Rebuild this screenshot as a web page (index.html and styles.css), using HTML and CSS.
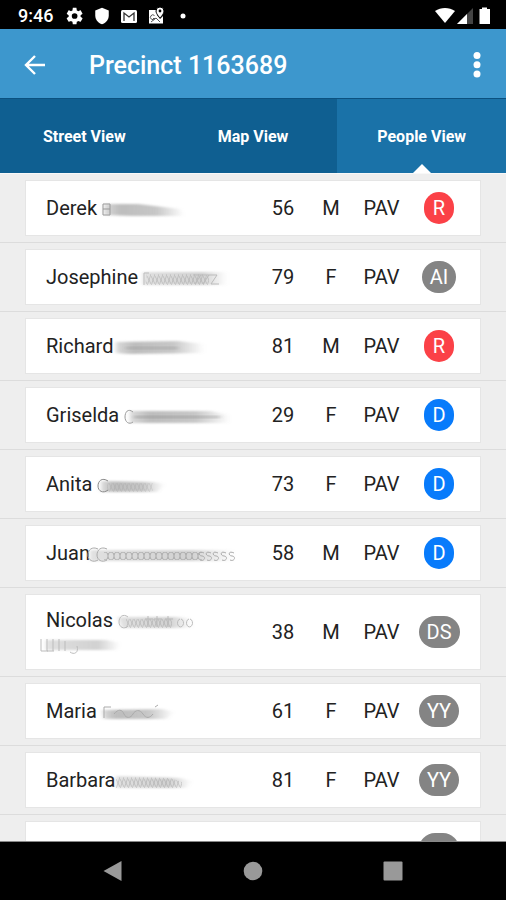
FILE: index.html
```html
<!DOCTYPE html>
<html lang="en">
<head>
<meta charset="utf-8">
<meta name="viewport" content="width=device-width, initial-scale=1">
<title>Precinct 1163689</title>
<link rel="stylesheet" href="styles.css">
</head>
<body>
<svg class="defs" aria-hidden="true">
  <defs>
    <linearGradient id="fade"><stop offset="0" stop-color="#999" stop-opacity=".35"/><stop offset=".2" stop-color="#999" stop-opacity=".65"/><stop offset=".65" stop-color="#999" stop-opacity=".55"/><stop offset="1" stop-color="#999" stop-opacity="0"/></linearGradient>
    <linearGradient id="fade-light"><stop offset="0" stop-color="#999" stop-opacity=".3"/><stop offset=".7" stop-color="#999" stop-opacity=".45"/><stop offset="1" stop-color="#999" stop-opacity="0"/></linearGradient>
    <filter id="soft" x="-20%" y="-40%" width="140%" height="180%"><feGaussianBlur stdDeviation="2 1"/></filter>
    <filter id="fine" x="-20%" y="-40%" width="140%" height="180%"><feGaussianBlur stdDeviation=".7"/></filter>
    <pattern id="hatch" width="4" height="20" patternUnits="userSpaceOnUse"><path d="M0 17 4 5M0 7 4 15" stroke="#888" stroke-opacity=".3" fill="none"/></pattern>
    <pattern id="rings" width="6" height="20" patternUnits="userSpaceOnUse"><ellipse cx="3" cy="11" rx="3" ry="4" stroke="#888" stroke-opacity=".5" fill="none"/></pattern>
  </defs>
</svg>

<div class="status">
  <span class="clock">9:46</span>
  <svg width="18" height="18" viewBox="0 0 24 24" fill="#fff" aria-hidden="true"><path d="M19.4 13c.1-.3.1-.7.1-1s0-.7-.1-1l2.4-1.800c.2-.2.3-.5.1-.7l-2.200-3.900c-.1-.2-.4-.3-.7-.2l-2.700 1.100c-.6-.4-1.200-.8-1.900-1L14 1.500c0-.3-.3-.5-.5-.5h-4c-.3 0-.5.200-.5.500L8.600 4.500c-.7.2-1.300.6-1.900 1L4 4.400c-.3-.1-.6 0-.7.2L1.100 8.500c-.1.200-.1.500.1.700L3.600 11c-.1.300-.1.700-.1 1s0 .7.1 1l-2.400 1.800c-.2.200-.3.500-.1.700l2.200 3.900c.1.200.4.300.7.200l2.700-1.100c.6.400 1.200.8 1.900 1l.4 3c0 .3.200.5.500.5h4c.3 0 .5-.2.500-.5l.4-3c.7-.2 1.300-.6 1.900-1l2.700 1.100c.3.100.6 0 .7-.2l2.200-3.900c.1-.2.1-.5-.1-.7L19.400 13zM11.500 15.800a3.800 3.800 0 1 1 0-7.600 3.800 3.800 0 0 1 0 7.600z"/></svg>
  <svg width="18" height="18" viewBox="0 0 24 24" fill="#fff" aria-hidden="true"><path d="M12 1 3 4.500V11c0 6 3.800 10.500 9 12 5.200-1.500 9-6 9-12V4.500z"/></svg>
  <svg width="18" height="18" viewBox="0 0 18 18" aria-hidden="true"><rect x="1" y="3" width="16" height="13" rx="1.500" fill="#fff"/><path d="M4 14V6l5 4 5-4v8" fill="none" stroke="#333" stroke-width="1.300"/></svg>
  <svg width="18" height="18" viewBox="0 0 18 18" aria-hidden="true"><path d="M2 3h8v5l3 4 3-3v7.500H2z" fill="#fff"/><path d="M13 0a4 4 0 0 0-4 4c0 3 4 7 4 7s4-4 4-7a4 4 0 0 0-4-4z" fill="#fff" stroke="#000"/><circle cx="13" cy="4" r="1.400"/><path d="M7.500 8.500a2.400 2.400 0 1 0 .4 3H6M4 15l5-4 4 4" fill="none" stroke="#555"/></svg>
  <svg width="18" height="18" viewBox="0 0 18 18" aria-hidden="true"><circle cx="9" cy="9" r="2.500" fill="#fff"/></svg>
  <span class="signals">
    <svg width="20" height="18" viewBox="0 0 20 18" aria-hidden="true"><path d="M0 4C6 0 14 0 20 4L10 16z" fill="#fff"/></svg>
    <svg width="16" height="18" viewBox="0 0 16 18" aria-hidden="true"><path d="M0 17 16 1v16z" fill="#444"/><path d="M0 17 10 7v10z" fill="#fff"/></svg>
    <svg width="20" height="18" viewBox="0 0 20 18" aria-hidden="true"><path d="M7 2V.5h5V2h3v15H4.500V2z" fill="#fff"/></svg>
  </span>
</div>

<header class="bar">
  <button class="icon-button" type="button" aria-label="Back"><svg width="22" height="22" viewBox="0 0 22 22" fill="none" stroke="#fff" stroke-width="2.400"><path d="M21 11H3M11 2l-9 9 9 9"/></svg></button>
  <h1>Precinct 1163689</h1>
  <button class="icon-button" type="button" aria-label="More options"><svg width="10" height="28" viewBox="0 0 10 28" fill="#fff"><circle cx="5" cy="4.500" r="3.500"/><circle cx="5" cy="13.800" r="3.500"/><circle cx="5" cy="23" r="3.500"/></svg></button>
</header>

<nav class="tabs">
  <a href="#street">Street View</a>
  <a href="#map">Map View</a>
  <a class="active" href="#people" aria-current="page">People View</a>
</nav>

<main id="people">
<ul class="people">
  <li><div class="card"><div class="name">Derek <svg width="90" height="20" aria-hidden="true"><path filter="url(#soft)" fill="url(#fade)" d="M2 4 36 4 78 9 82 16 30 16 2 15z"/><path filter="url(#fine)" d="M1 15V4h7v11zM1 9h7" fill="none" stroke="#999"/></svg></div><span>56</span><span>M</span><span>PAV</span><span><b class="badge red">R</b></span></div></li>
  <li><div class="card"><div class="name">Josephine <svg width="90" height="20" aria-hidden="true"><path filter="url(#soft)" fill="url(#fade-light)" d="M0 3H84V16H0z"/><path filter="url(#fine)" fill="url(#hatch)" d="M4 4H58L66 7V16H2z"/><path filter="url(#fine)" d="M1 4v12M1 4h5M66 6h8l-6 9h8M58 6h8l-6 9M50 6h8l-6 9" fill="none" stroke="#bbb"/></svg></div><span>79</span><span>F</span><span>PAV</span><span><b class="badge">AI</b></span></div></li>
  <li><div class="card"><div class="name">Richard <svg width="90" height="20" aria-hidden="true"><path filter="url(#soft)" fill="url(#fade)" d="M-2 4 60 3 86 6V15L10 16-2 15z"/><path filter="url(#soft)" d="M8 9H60V11H8z" fill="#888" fill-opacity=".4"/></svg></div><span>81</span><span>M</span><span>PAV</span><span><b class="badge red">R</b></span></div></li>
  <li><div class="card"><div class="name">Griselda <svg width="108" height="20" aria-hidden="true"><path filter="url(#soft)" fill="url(#fade)" d="M6 4 86 4 106 8V16H6z"/><path filter="url(#soft)" d="M10 9H96V11H10z" fill="#777" fill-opacity=".4"/><path filter="url(#fine)" d="M9 5C4 1 1 5 1 10s4 8 8 5" fill="none" stroke="#999"/></svg></div><span>29</span><span>F</span><span>PAV</span><span><b class="badge blue">D</b></span></div></li>
  <li><div class="card"><div class="name">Anita <svg width="72" height="20" aria-hidden="true"><path filter="url(#soft)" fill="url(#fade)" d="M4 5 56 6 68 8 60 16H4z"/><path filter="url(#fine)" fill="url(#hatch)" d="M10 7H56V16H10z" opacity=".6"/><path filter="url(#fine)" d="M11 5C5 1 1 5 1 10s5 8 10 4" fill="none" stroke="#888"/></svg></div><span>73</span><span>F</span><span>PAV</span><span><b class="badge blue">D</b></span></div></li>
  <li><div class="card"><div class="name">Juan<svg width="150" height="20" aria-hidden="true"><path filter="url(#soft)" fill="url(#fade-light)" d="M0 5H144V16H0z"/><path filter="url(#fine)" fill="url(#rings)" d="M14 7H112V15H14z"/><path filter="url(#fine)" d="M8 4C2 1-2 5-2 10s5 8 10 5M17 4C11 1 7 5 7 10s5 8 10 5M114 8c-6-3-6 3-2 3s3 6-2 4M121 8c-6-3-6 3-2 3s3 6-2 4M128 8c-6-3-6 3-2 3s3 6-2 4M136 8c-6-3-6 3-2 3s3 6-2 4M144 8c-6-3-6 3-2 3s3 6-2 4" fill="none" stroke="#aaa"/></svg></div><span>58</span><span>M</span><span>PAV</span><span><b class="badge blue">D</b></span></div></li>
  <li><div class="card"><div class="name">Nicolas <svg width="82" height="20" aria-hidden="true"><path filter="url(#soft)" fill="url(#fade-light)" d="M0 5H60L74 7V16H4z"/><path filter="url(#fine)" fill="url(#hatch)" d="M8 7H54V16H8z"/><path filter="url(#fine)" d="M10 5C5 1 1 5 1 10s5 8 9 4M30 4v11M27 7h8M39 4v11M36 7h8M50 4v11M47 7h8M62 7a3 4 0 1 0 1 0M71 7a3 4 0 1 0 1 0" fill="none" stroke="#bbb"/></svg><br><svg width="90" height="20" aria-hidden="true"><path filter="url(#soft)" fill="url(#fade-light)" d="M0 4H60L74 7 70 14H0z"/><path filter="url(#fine)" d="M-5 3V15H2M1 3V15H8M7 3V15M13 3V15M19 5V15M31 10c2 7-3 9-7 6" fill="none" stroke="#bbb"/></svg></div><span>38</span><span>M</span><span>PAV</span><span><b class="badge">DS</b></span></div></li>
  <li><div class="card"><div class="name">Maria <svg width="80" height="20" aria-hidden="true"><path filter="url(#soft)" fill="url(#fade)" d="M0 7 60 6 72 9 64 16H2z"/><path filter="url(#fine)" d="M2 15V4h7M53 4l3-2M12 11c4-5 8-5 10 0s7 4 9 0 7-5 10 0 7 4 10 0" fill="none" stroke="#aaa"/></svg></div><span>61</span><span>F</span><span>PAV</span><span><b class="badge">YY</b></span></div></li>
  <li><div class="card"><div class="name">Barbara <svg width="80" height="20" aria-hidden="true"><path filter="url(#soft)" fill="url(#fade-light)" d="M-4 4 60 6 72 9 66 16H-4z"/><path filter="url(#fine)" fill="url(#hatch)" d="M-4 4 50 6 62 10V16H-4z"/></svg></div><span>81</span><span>F</span><span>PAV</span><span><b class="badge">YY</b></span></div></li>
  <li><div class="card"><div class="name"></div><span></span><span></span><span></span><span><b class="badge wide"></b></span></div></li>
</ul>
</main>

<footer class="system">
  <button type="button" aria-label="Back"><svg width="22" height="22" viewBox="0 0 22 22" fill="#999"><path d="M1.500 11 19.500 1v20z"/></svg></button>
  <button type="button" aria-label="Home"><svg width="22" height="22" viewBox="0 0 22 22" fill="#999"><circle cx="11" cy="11" r="9.300"/></svg></button>
  <button type="button" aria-label="Recent apps"><svg width="22" height="22" viewBox="0 0 22 22" fill="#999"><rect x="1.500" y="1.500" width="19" height="19" rx="1"/></svg></button>
</footer>
</body>
</html>
```
FILE: styles.css
```css
* {
  box-sizing: border-box;
}

body {
  margin: 0;
  height: 100vh;
  display: flex;
  flex-direction: column;
  background: #eee;
  color: #222;
  font-family: Roboto, "Liberation Sans", sans-serif;
  font-size: 20px;
}

svg {
  overflow: visible;
  flex: none;
}

.defs {
  position: absolute;
  width: 0;
  height: 0;
}

button {
  padding: 0;
  border: 0;
  background: none;
  display: flex;
  align-items: center;
  justify-content: center;
}

.status {
  flex: none;
  display: flex;
  align-items: center;
  gap: 9px;
  padding: 2px 11px 0 18px;
  height: 29px;
  background: #000;
  color: #fff;
}

.clock {
  margin-right: 4px;
  font-size: 18px;
  font-weight: 500;
  line-height: 27px;
}

.signals {
  margin-left: auto;
  display: flex;
  gap: 2px;
}

.bar {
  flex: none;
  display: flex;
  align-items: center;
  height: 70px;
  padding: 3px 12px 0 18px;
  background: #3d97cd;
  border-bottom: 1px solid #0b5180;
  color: #fff;
}

.icon-button {
  width: 34px;
  height: 44px;
}

.bar h1 {
  flex: 1;
  margin: 0 0 0 37px;
  padding-top: 2px;
  font-size: 25px;
  font-weight: 500;
  line-height: 34px;
}

.tabs {
  flex: none;
  display: grid;
  grid-template-columns: repeat(3, 1fr);
  height: 75px;
  background: #0f5f91;
  border-bottom: 1px solid #f8f8f8;
}

.tabs a {
  position: relative;
  display: flex;
  align-items: center;
  justify-content: center;
  color: #fff;
  font-size: 16px;
  font-weight: 700;
  text-decoration: none;
}

.tabs .active {
  background: #1a72a8;
}

.tabs .active::after {
  content: "";
  position: absolute;
  bottom: 0;
  left: calc(50% - 9px);
  border: 9px solid transparent;
  border-top: 0;
  border-bottom-color: #fff;
}

main {
  flex: 1;
  min-height: 0;
  overflow: hidden;
}

.people {
  list-style: none;
  margin: 0;
  padding: 0;
}

.people li {
  padding: 6px 25px;
  border-bottom: 1px solid #dcdcdc;
}

.card {
  display: grid;
  grid-template-columns: 1fr 48px 48px 53px 62px;
  align-items: center;
  justify-items: center;
  min-height: 56px;
  padding: 11px 10px 11px 20px;
  background: #fff;
  border: 1px solid #e5e5e5;
  line-height: 24px;
}

.name {
  justify-self: start;
  padding: 2px 0;
  white-space: nowrap;
}

.name svg {
  vertical-align: middle;
}

.badge {
  display: block;
  min-width: 30px;
  height: 32px;
  padding: 0 8px;
  border-radius: 16px;
  background: #848484;
  color: #fff;
  font-weight: 400;
  line-height: 32px;
  text-align: center;
}

.wide {
  width: 40px;
}

.red {
  background: #fb4147;
}

.blue {
  background: #087bfb;
}

.system {
  flex: none;
  display: grid;
  grid-template-columns: repeat(3, 140px);
  justify-content: center;
  height: 59px;
  background: #000;
  border-top: 1px solid #888;
}
```
